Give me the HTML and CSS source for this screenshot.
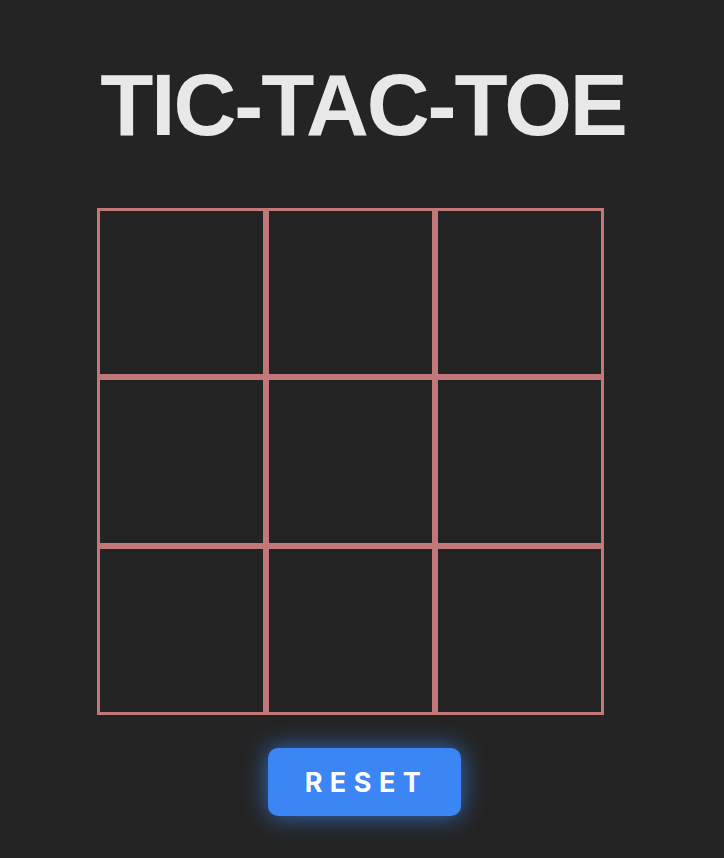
FILE: index.html
```html
<!DOCTYPE html>
<html lang="en">
<head>
<meta charset="utf-8">
<title>Tic-Tac-Toe</title>
<link rel="stylesheet" href="styles.css">
</head>
<body>
<main class="app">
  <h1 class="title">TIC-TAC-TOE</h1>
  <div class="board">
    <div class="cell"></div><div class="cell"></div><div class="cell"></div>
    <div class="cell"></div><div class="cell"></div><div class="cell"></div>
    <div class="cell"></div><div class="cell"></div><div class="cell"></div>
  </div>
  <button class="reset" type="button">RESET</button>
</main>
</body>
</html>
```
FILE: styles.css
```css
html, body {
  margin: 0;
  padding: 0;
  background: #242424;
  height: 100%;
}
body {
  font-family: Inter, "Liberation Sans", sans-serif;
}
.app {
  display: flex;
  flex-direction: column;
  align-items: center;
  padding-top: 52px;
}
.title {
  margin: 0;
  font-family: "Liberation Sans", Arial, sans-serif;
  font-size: 87px;
  font-weight: 700;
  line-height: 106px;
  color: #e8e8e8;
  letter-spacing: -2px;
  padding-left: 2px;
}
.board {
  margin-top: 50px;
  margin-right: 23px;
  display: grid;
  grid-template-columns: repeat(3, 169px);
  grid-template-rows: repeat(3, 169px);
}
.cell {
  border: 3px solid #c27878;
  background: #232323;
}
.reset {
  margin-top: 33px;
  margin-left: 4px;
  width: 193px;
  height: 68px;
  border: none;
  border-radius: 10px;
  background: #3b86f4;
  color: #ffffff;
  font-family: Inter, "Liberation Sans", sans-serif;
  font-size: 27px;
  font-weight: 700;
  letter-spacing: 7.5px;
  padding: 0 0 0 5px;
  box-shadow: 0 0 24px rgba(59, 134, 244, 0.75);
  cursor: pointer;
}
```
